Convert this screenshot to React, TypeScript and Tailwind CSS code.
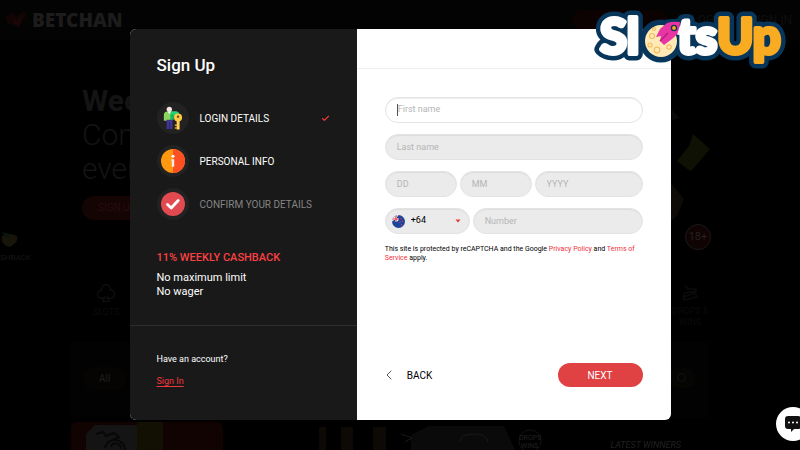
import React, { useState } from "react";
import { Check, ChevronLeft, Search } from "lucide-react";
import { BsSuitClub } from "react-icons/bs";

function LoginIcon() {
  return (
    <svg viewBox="0 0 24 26" className="w-[22px] h-6" aria-hidden="true">
      <path d="M2 10q0-4 4-4h9q3 0 3 3v2h-7v5H2z" fill="#8bd65c" />
      <path d="M9 6h7q2.500 0 2.500 2.500V10h-8.500z" fill="#1fd37a" />
      <path d="M9 9h4v6H9z" fill="#17b866" />
      <path d="M6 6l2 2.500L10 6z" fill="#fff" />
      <circle cx="8" cy="3.500" r="2.900" fill="#f4e7e1" />
      <path d="M5 15h6.500v10H5z" fill="#40358f" />
      <path d="M8.200 18v7" stroke="#292264" strokeWidth="0.800" />
      <circle cx="17.500" cy="12.500" r="4.400" fill="#ffc843" />
      <circle cx="17.500" cy="11.500" r="1.300" fill="#5b4520" />
      <path d="M16 16h3.200v9.500H16z" fill="#ffd15c" />
      <path d="M14 20h2.500v1.700H14zM14 23h2.500v1.700H14z" fill="#e9a22b" />
    </svg>
  );
}

function InfoIcon() {
  return (
    <svg viewBox="0 0 24 24" className="w-6 h-6" aria-hidden="true">
      <circle cx="12" cy="12" r="12" fill="#ff9811" />
      <path d="M12 0a12 12 0 0 1 0 24z" fill="#ff5023" />
      <circle cx="12" cy="7.300" r="1.500" fill="#fff" />
      <path d="M10.500 10.300h2.700v7.500h-2.400v-6.300h-.6z" fill="#f3eee8" />
    </svg>
  );
}

function ConfirmIcon() {
  return (
    <svg viewBox="0 0 24 24" className="w-6 h-6" aria-hidden="true">
      <circle cx="12" cy="12" r="12" fill="#e04a50" />
      <path d="M6.500 12.500l3.700 3.500 7-7.500" fill="none" stroke="#fff" strokeWidth="2.800" strokeLinecap="round" strokeLinejoin="round" />
    </svg>
  );
}

function FlagIcon() {
  return (
    <svg viewBox="0 0 26 26" className="w-[13px] h-[13px] shrink-0" aria-hidden="true">
      <defs>
        <clipPath id="flag"><circle cx="13" cy="13" r="13" /></clipPath>
      </defs>
      <g clipPath="url(#flag)">
        <path d="M0 0h26v26H0z" fill="#1b459b" />
        <path d="M0 0l12 12M12 0L0 12" stroke="#fff" strokeWidth="2.500" />
        <path d="M8 0v13M0 8h13" stroke="#fff" strokeWidth="4" />
        <path d="M8 0v13M0 8h13" stroke="#e0353f" strokeWidth="2.400" />
        <path d="M18 6v3M21 11v3M16 13v3M19 18v3" stroke="#c2385a" strokeWidth="2.500" />
      </g>
    </svg>
  );
}

function SlotsUpLogo() {
  return (
    <svg viewBox="0 0 194 64" className="w-[194px] h-16" role="img" aria-label="SlotsUp">
      <defs>
        <g id="slotsup-white">
          <text x="6" y="46">Sl</text>
          <text x="83" y="46">ts</text>
        </g>
        <text id="slotsup-up" x="123" y="46">Up</text>
      </defs>
      <g className="font-['Lato',sans-serif] font-black text-[49px]" strokeLinejoin="round">
        <g stroke="#08365b" fill="#08365b" strokeWidth="13">
          <use href="#slotsup-white" />
          <use href="#slotsup-up" />
          <circle cx="67" cy="33" r="15" />
          <path d="M66 21l7-6 13-1-2 11-6 6z" strokeWidth="7" />
        </g>
        <use href="#slotsup-white" fill="#fff" stroke="#fff" strokeWidth="4" />
        <use href="#slotsup-up" fill="#f9ab22" stroke="#f9ab22" strokeWidth="4" />
      </g>
      <circle cx="67" cy="33" r="16" fill="#ffe9b5" />
      <g fill="none" stroke="#f3bd62" strokeWidth="1.200">
        <circle cx="58" cy="28" r="2.500" />
        <circle cx="56" cy="37" r="2" />
        <circle cx="63" cy="42" r="2.800" />
        <circle cx="75" cy="39" r="2.200" />
        <circle cx="60" cy="21" r="1.500" />
      </g>
      <path d="M86 14q-8-1-13 1l-7 6-4 8 5-1-1 5 4 4 8-6q6-5 6-7 2-5 2-10z" fill="#e935a3" />
      <path d="M66 33l8-8" stroke="#b41f83" strokeWidth="1.500" />
      <circle cx="80" cy="20" r="3.200" fill="#08365b" />
      <circle cx="80" cy="20" r="1.900" fill="#f9ab22" />
    </svg>
  );
}

function Backdrop() {
  return (
    <div className="flex h-full flex-col text-[#1c1c1c]" aria-hidden="true">
      <header className="flex h-10 shrink-0 items-center bg-[#030303] px-1">
        <svg viewBox="0 0 24 22" className="w-6 h-[22px]">
          <path d="M1 8l8-5 3 4 8-5 2 5-7 12-6-3-5-1z" fill="#100404" />
          <path d="M8 9l5 3 6-7-4 12-5-3z" fill="#1c0706" />
        </svg>
        <span className="ml-1 font-['Noto_Sans',sans-serif] text-[19px] font-black">BETCHAN</span>
        <span className="ml-auto mr-6 h-5 w-24 rounded-full bg-[#0c0202]" />
        <span className="mr-6 text-xs text-[#0f0f0f]">LOGIN</span>
        <span className="mr-1 text-xs text-[#0f0f0f]">SIGN IN</span>
      </header>

      <section className="flex h-[230px] shrink-0">
        <div className="flex w-[82px] flex-col items-start pt-[190px]">
          <svg viewBox="0 0 20 18" className="h-[18px] w-5 shrink-0">
            <path d="M2 6q7-4 15 0 2 6-7 11Q0 15 2 6z" fill="#17140a" />
            <path d="M2 2l7 2-3 4z" fill="#061810" />
          </svg>
          <span className="mt-1 text-[8px] leading-3 text-[#161616]">SHBACK</span>
        </div>
        <div className="pt-11 text-3xl text-[#141414]">
          <p className="leading-[34px] font-bold">Weekly</p>
          <p className="leading-[34px] font-light">Cons</p>
          <p className="leading-[34px] font-light">every</p>
          <p className="mt-[10px] rounded-full bg-[#140404] px-4 text-[10px] leading-6 text-[#2a0c0d]">SIGN UP</p>
        </div>
        <div className="ml-auto flex w-[130px] flex-col items-start">
          <svg viewBox="0 0 42 120" className="mt-[64px] h-[120px] w-[42px]">
            <path d="M2 6l8 8-8 2z" fill="#090b0a" />
            <path d="M23 30l17 15-16 19-4 3-13-10 12-15z" fill="#0f1104" />
            <path d="M1 79l13 16-7 17-6 5z" fill="#0e0a06" />
          </svg>
          <span className="ml-[15px] flex size-[26px] items-center justify-center rounded-full border border-[#1c1818] bg-[#100303] text-[11px] text-[#272121]">18+</span>
        </div>
      </section>

      <section className="flex h-[72px] shrink-0 items-start justify-between pt-[14px] text-[9px] text-[#0b0b0b]">
        <div className="ml-[82px] flex w-12 flex-col items-center gap-1">
          <BsSuitClub size={18} className="text-[#121212]" />
          <span>SLOTS</span>
        </div>
        <div className="mr-[86px] flex w-12 flex-col items-center gap-1 text-center leading-[11px]">
          <svg viewBox="0 0 18 18" className="size-[18px]" fill="none" stroke="currentColor" strokeWidth="1.500">
            <path d="M4 1l3 4h8v2L4 9M2 13l12-4 2 4-12 3zM3 17V9" />
          </svg>
          <span>DROPS &amp; WINS</span>
        </div>
      </section>

      <section className="mr-[92px] ml-[71px] flex h-[76px] shrink-0 items-center justify-between bg-[#020202] px-3 pb-1">
        <span className="rounded-full bg-[#050403] px-4 py-1 text-[10px] text-[#1e1e1e]">All</span>
        <span className="rounded-full bg-[#050504] px-2 py-1 text-[#121212]"><Search size={12} /></span>
      </section>

      <section className="mr-[92px] ml-[71px] flex flex-1 items-start gap-24 pt-1">
        <svg viewBox="0 0 152 30" className="w-[152px] shrink-0">
          <rect width="152" height="40" rx="6" fill="#120303" />
          <path d="M15 30V12L24 3h42v27z" fill="#141414" />
          <path d="M66 0h26v30H66z" fill="#120f03" />
          <path d="M25 12l7-2 3 4 8-3 5 4-6 3M34 26c2-12 20-10 20 2M40 25c1-6 10-4 10 2" fill="none" stroke="#080808" strokeWidth="2" />
        </svg>
        <svg viewBox="0 0 230 30" className="w-[230px] shrink-0">
          <path d="M0 5h7v25H0zM22 5h12v25H22zM54 5h13v25H54z" fill="#0d0904" />
          <path d="M92 30V13l18-9h75l12 26z" fill="#0a0a0a" />
          <path d="M141 20q0-8 14-8 13 0 14 8M82 12l11 4-7 4" fill="none" stroke="#191919" />
          <circle cx="211" cy="19" r="11" fill="none" stroke="#141414" />
          <text x="200" y="18" fontSize="7" fill="#202020">DROPS</text>
          <text x="202" y="26" fontSize="7" fill="#202020">WINS</text>
        </svg>
      </section>
    </div>
  );
}

const steps = [
  { label: "LOGIN DETAILS", icon: <LoginIcon />, done: true, color: "text-white" },
  { label: "PERSONAL INFO", icon: <InfoIcon />, done: false, color: "text-white" },
  { label: "CONFIRM YOUR DETAILS", icon: <ConfirmIcon />, done: false, color: "text-[#858585]" },
];

const fieldClass =
  "h-[26px] min-w-0 rounded-full border border-[#e3e3e3] bg-[#ebebeb] px-[11px] text-[9px] text-black placeholder:text-[#b5b5b5] shadow-[inset_0_1px_1px_#dddddd] outline-none";

export default function App() {
  const [firstName, setFirstName] = useState("");
  const [code, setCode] = useState("+64");

  return (
    <div className="relative h-screen overflow-hidden bg-black font-['Roboto',sans-serif]">
      <Backdrop />

      <p className="absolute right-[119px] bottom-0 text-[9px] leading-[10px] text-[#202020] italic">LATEST WINNERS</p>

      <div className="absolute inset-0 flex items-center justify-center pb-px">
        <main className="flex w-2/3 min-w-[541px] overflow-hidden rounded-md bg-white">
          {/* Steps and promo */}
          <aside className="flex w-[42%] flex-col bg-[#191919] text-white">
            <div className="px-[27px] pt-6">
              <h1 className="text-[17px] leading-6 font-medium">Sign Up</h1>
              <ol className="mt-[25px] flex flex-col gap-[11px]">
                {steps.map((step) => (
                  <li key={step.label} className="flex items-center">
                    <span className="flex size-8 items-center justify-center rounded-full bg-[#222222]">{step.icon}</span>
                    <span className={`ml-[11px] text-[10px] ${step.color}`}>{step.label}</span>
                    {step.done && <Check size={9} strokeWidth={3} className="ml-auto text-[#f0383c]" />}
                  </li>
                ))}
              </ol>
              <h2 className="mt-[30px] text-[11px] leading-4 font-medium text-[#f94144]">11% WEEKLY CASHBACK</h2>
              <p className="mt-[5px] text-[11px] leading-[14px]">
                No maximum limit
                <br />
                No wager
              </p>
            </div>
            <div className="mt-[26px] border-t border-[#2d2d2d] px-[27px] pt-[27px] pb-[33px] text-[9px] leading-3">
              <p>Have an account?</p>
              <a href="#signin" className="mt-[10px] inline-block text-[#f0383c] underline underline-offset-2">Sign In</a>
            </div>
          </aside>

          {/* Personal info form */}
          <form className="flex flex-1 flex-col" onSubmit={(e) => e.preventDefault()}>
            <div className="h-10 border-b border-[#eeeeee]" />
            <div className="flex flex-1 flex-col gap-[11px] px-7 pt-7">
              <label className="flex h-[26px] items-center rounded-full border border-[#e3e3e3] px-[11px] shadow-[inset_0_1px_1px_#eeeeee]">
                <span className="h-3 w-px bg-[#555555]" />
                <input
                  aria-label="First name"
                  placeholder="First name"
                  value={firstName}
                  onChange={(e) => setFirstName(e.target.value)}
                  className="min-w-0 flex-1 text-[9px] outline-none placeholder:text-[#b5b5b5]"
                />
              </label>
              <input aria-label="Last name" placeholder="Last name" className={fieldClass} />
              <div className="grid grid-cols-[2fr_2fr_3fr] gap-[3px]">
                <input aria-label="Day" placeholder="DD" className={fieldClass} />
                <input aria-label="Month" placeholder="MM" className={fieldClass} />
                <input aria-label="Year" placeholder="YYYY" className={fieldClass} />
              </div>
              <div className="grid grid-cols-[1fr_2fr] gap-[3px]">
                <label className="flex h-[26px] items-center rounded-full border border-[#e3e3e3] bg-[#ebebeb] pr-2 pl-1.5 shadow-[inset_0_1px_1px_#dddddd]">
                  <FlagIcon />
                  <select
                    aria-label="Country code"
                    value={code}
                    onChange={(e) => setCode(e.target.value)}
                    className="ml-[6px] min-w-0 flex-1 appearance-none text-[9px] text-black outline-none"
                  >
                    <option>+64</option>
                  </select>
                  <svg viewBox="0 0 6 4" className="h-1 w-1.5" aria-hidden="true">
                    <path d="M0.500 0.500h5L3 3.500z" fill="#e53935" />
                  </svg>
                </label>
                <input type="tel" aria-label="Number" placeholder="Number" className={fieldClass} />
              </div>
              <p className="text-[7px] leading-[9px] text-black">
                This site is protected by reCAPTCHA and the Google{" "}
                <a href="#privacy" className="text-[#f0303c]">Privacy Policy</a> and{" "}
                <a href="#terms" className="text-[#f0303c]">Terms of Service</a> apply.
              </p>
            </div>
            <div className="flex items-center justify-between px-7 pb-[33px]">
              <button type="button" className="flex items-center text-[10px] text-black">
                <ChevronLeft size={16} strokeWidth={1} className="-ml-1" />
                <span className="ml-[10px]">BACK</span>
              </button>
              <button type="submit" className="h-6 w-[85px] rounded-full bg-[#e04142] text-[10px] text-white">NEXT</button>
            </div>
          </form>
        </main>
      </div>

      <div className="absolute top-2 right-3">
        <SlotsUpLogo />
      </div>

      <button type="button" aria-label="Open chat" className="absolute -right-2.5 bottom-[9px] flex size-[34px] items-center justify-center rounded-full bg-white">
        <svg viewBox="0 0 18 18" className="size-[18px]" aria-hidden="true">
          <path d="M4 1h10q3 0 3 3v7q0 3-3 3h-4l-3 3v-3H4q-3 0-3-3V4q0-3 3-3z" fill="#111" />
          <path d="M5 7.500h0M9 7.500h0M13 7.500h0" stroke="#fff" strokeWidth="2" strokeLinecap="round" />
        </svg>
      </button>
    </div>
  );
}
